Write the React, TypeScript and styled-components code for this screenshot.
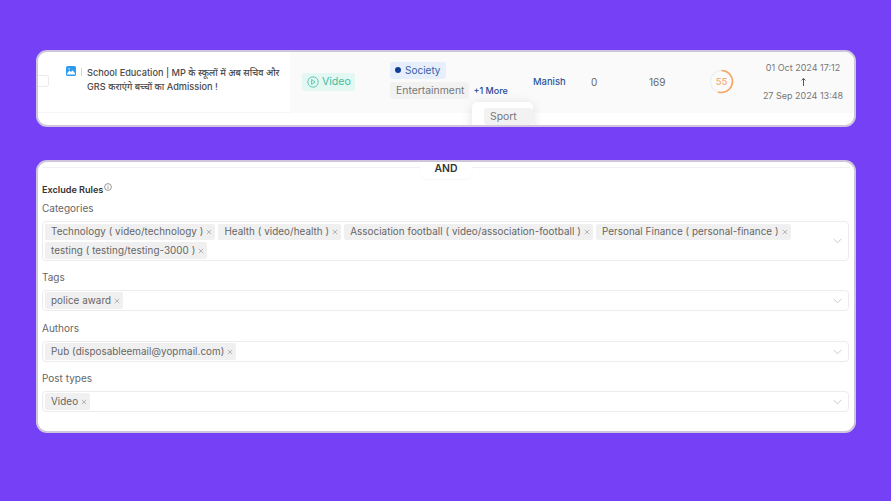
import React from 'react';
import styled, { createGlobalStyle } from 'styled-components';

const GlobalStyle = createGlobalStyle`
  html, body {
    margin: 0;
    padding: 0;
    background: #7540f6;
  }
  * {
    box-sizing: border-box;
  }
`;

const FONT = `Inter, "Noto Sans", "Noto Sans CJK SC", sans-serif`;

const Page = styled.div`
  width: 891px;
  height: 501px;
  padding: 50px 35px 0 36px;
  display: flex;
  flex-direction: column;
  gap: 33px;
  font-family: ${FONT};
  background: #7540f6;
  overflow: hidden;
`;

const Card = styled.section<{ $height: number }>`
  position: relative;
  height: ${p => p.$height}px;
  background: #fff;
  border: 2px solid #cfc6de;
  border-radius: 11px;
  overflow: hidden;
`;

const Row = styled.div`
  display: flex;
  height: 61px;
  color: #666;
  font-size: 10.5px;
`;

const TitleCell = styled.div`
  flex: none;
  width: 252px;
  height: 61px;
  display: flex;
  align-items: flex-start;
  padding-top: 13px;
  border-bottom: 1px solid #f4f4f4;
`;

const Checkbox = styled.span`
  flex: none;
  width: 11px;
  height: 12px;
  margin-top: 10px;
  background: #fff;
  border: 1px solid #ebebeb;
  border-left: none;
  border-radius: 0 3px 3px 0;
`;

const MediaIcon = styled.svg`
  flex: none;
  width: 10px;
  height: 10px;
  margin-left: 17px;
  margin-top: 1px;
`;

const Divider = styled.span`
  flex: none;
  width: 1px;
  height: 8px;
  margin: 3px 5px 0 5px;
  background: #d4d4d4;
`;

const Title = styled.div`
  width: 199px;
  font-size: 9.2px;
  font-weight: 500;
  line-height: 14px;
  color: #4a4a4a;
  margin-top: 1px;
`;

const DataCells = styled.div`
  flex: 1;
  height: 61px;
  padding-bottom: 2px;
  display: flex;
  align-items: center;
  background: #fafafa;
`;

const Cell = styled.div<{ $width: number; $center?: boolean }>`
  flex: none;
  width: ${p => p.$width}px;
  display: flex;
  align-items: center;
  justify-content: ${p => (p.$center ? 'center' : 'flex-start')};
`;

const TypeChip = styled.span`
  margin-left: 12px;
  height: 18px;
  width: 53px;
  display: flex;
  align-items: center;
  gap: 3px;
  padding-left: 5px;
  border-radius: 3px;
  background: #e3f8f2;
  color: #3fbfa4;
  font-size: 10.6px;
`;

const TagStack = styled.div`
  display: flex;
  flex-direction: column;
  gap: 3px;
  margin-top: -3px;
`;

const TagLine = styled.div`
  display: flex;
  align-items: center;
  gap: 4px;
`;

const SocietyChip = styled.span`
  align-self: flex-start;
  height: 17px;
  display: flex;
  align-items: center;
  gap: 4px;
  padding: 0 6px 0 5px;
  border-radius: 3px;
  background: #e6effb;
  color: #3a5ea8;
  font-size: 10px;
`;

const Dot = styled.span`
  width: 6px;
  height: 6px;
  border-radius: 50%;
  background: #123f96;
`;

const GreyChip = styled.span`
  height: 17px;
  display: flex;
  align-items: center;
  padding: 0 5px 0 6px;
  border-radius: 3px;
  background: #f2f2f2;
  color: #777;
  font-size: 10.4px;
`;

const MoreLink = styled.span`
  color: #1f4b99;
  font-size: 9px;
  font-weight: 500;
  white-space: nowrap;
`;

const Popover = styled.div`
  position: absolute;
  left: 434px;
  top: 50px;
  width: 61px;
  height: 40px;
  padding: 6px 0 0 12px;
  background: #fff;
  border-radius: 5px;
  box-shadow: 0 2px 12px rgba(0, 0, 0, 0.12);
`;

const Author = styled.span`
  color: #2f5597;
  font-size: 9.4px;
  font-weight: 500;
`;

const Count = styled.span`
  color: #666;
  font-size: 10px;
`;

const Dates = styled.div`
  width: 100%;
  display: flex;
  flex-direction: column;
  align-items: center;
  color: #777;
  font-size: 9px;
  line-height: 14px;
  white-space: nowrap;
`;

const Arrow = styled.svg`
  width: 7px;
  height: 14px;
`;

const ScoreText = styled.text`
  font-family: ${FONT};
  font-size: 9.5px;
  font-weight: 500;
  fill: #f6ad76;
`;

const Form = styled.div`
  position: relative;
  height: 100%;
  padding: 21px 5px 0 4px;
`;

const TopRule = styled.div`
  position: absolute;
  left: 4px;
  right: 4px;
  top: 5px;
  height: 1px;
  background: #f0f0f0;
`;

const AndPill = styled.div`
  position: absolute;
  left: 382px;
  top: 0;
  width: 52px;
  height: 17px;
  display: flex;
  align-items: flex-start;
  justify-content: center;
  background: #fff;
  border-radius: 0 0 8px 8px;
  box-shadow: 0 1px 2px rgba(0, 0, 0, 0.04);
  color: #333;
  font-size: 10.4px;
  font-weight: 600;
`;

const RulesHeading = styled.div`
  display: flex;
  align-items: flex-start;
  height: 13px;
  color: #333;
  font-size: 9.1px;
  font-weight: 600;
  line-height: 13px;
`;

const InfoIcon = styled.svg`
  width: 8px;
  height: 8px;
  margin-left: 1px;
`;

const FieldLabel = styled.div`
  height: 13px;
  color: #666;
  font-size: 10px;
  line-height: 13px;
`;

const Field = styled.div<{ $marginTop: number; $minHeight: number }>`
  display: flex;
  align-items: center;
  justify-content: space-between;
  min-height: ${p => p.$minHeight}px;
  margin-top: ${p => p.$marginTop}px;
  padding: 1px 6px 1px 2px;
  border: 1px solid #ececec;
  border-radius: 4px;
  background: #fff;
`;

const Pills = styled.div`
  display: flex;
  flex-wrap: wrap;
  gap: 2px 3px;
`;

const Pill = styled.span`
  height: 16.5px;
  display: flex;
  align-items: center;
  gap: 3px;
  padding: 0 3px 1px 6px;
  border-radius: 2px;
  background: #f0f0f0;
  color: #666;
  font-size: 9.85px;
  letter-spacing: 0.05px;
  white-space: nowrap;
`;

const Remove = styled.svg`
  width: 6px;
  height: 6px;
  margin-top: 2px;
`;

const Chevron = styled.svg`
  flex: none;
  width: 9px;
  height: 6px;
`;

const Section = styled.div<{ $marginTop: number }>`
  margin-top: ${p => p.$marginTop}px;
`;

const PlayIcon = () => (
  <svg width="12" height="12" viewBox="0 0 12 12" fill="none" stroke="#3fbfa4" strokeWidth="0.8">
    <circle cx="6" cy="6" r="5.2" />
    <path d="M4.6 3.6 8.2 6 4.6 8.4Z" />
  </svg>
);

const ScoreRing = ({ value }: { value: number }) => {
  const r = 11;
  const c = 2 * Math.PI * r;
  return (
    <svg width="25" height="25" viewBox="0 0 25 25">
      <circle cx="12.5" cy="12.5" r={r} fill="none" stroke="#f1f1f1" strokeWidth="1.6" />
      <circle
        cx="12.5"
        cy="12.5"
        r={r}
        fill="none"
        stroke="#f5a763"
        strokeWidth="1.6"
        strokeDasharray={`${(c * value) / 100} ${c}`}
        transform="rotate(-90 12.5 12.5)"
      />
      <ScoreText x="12.5" y="16" textAnchor="middle">{value}</ScoreText>
    </svg>
  );
};

const RemoveIcon = () => (
  <Remove viewBox="0 0 6 6" fill="none" stroke="#999" strokeWidth="0.7">
    <path d="M.8.8l4.4 4.4M5.2.8.8 5.2" />
  </Remove>
);

const ChevronIcon = () => (
  <Chevron viewBox="0 0 9 6" fill="none" stroke="#c4c4c4" strokeWidth="0.9">
    <path d="M.7 1l3.8 3.8L8.3 1" />
  </Chevron>
);

const MultiSelect = ({ values, marginTop, minHeight }: { values: string[]; marginTop: number; minHeight: number }) => (
  <Field $marginTop={marginTop} $minHeight={minHeight}>
    <Pills>
      {values.map(v => (
        <Pill key={v}>
          {v}
          <RemoveIcon />
        </Pill>
      ))}
    </Pills>
    <ChevronIcon />
  </Field>
);

const App: React.FC = () => (
  <Page>
    <GlobalStyle />
    <Card $height={77}>
      <Row>
        <TitleCell>
          <Checkbox />
          <MediaIcon viewBox="0 0 10 10">
            <rect width="10" height="10" rx="1.6" fill="#2f9bf0" />
            <path d="M1 7.4 3.4 4.6 5 6l1.6-1.8L9 7.2V8.4H1Z" fill="#fff" />
            <circle cx="3" cy="2.8" r="0.8" fill="#cfe8fc" />
          </MediaIcon>
          <Divider />
          <Title>School Education | MP के स्कूलों में अब सचिव और GRS कराएंगे बच्चों का Admission !</Title>
        </TitleCell>
        <DataCells>
          <Cell $width={100}>
            <TypeChip>
              <PlayIcon />
              Video
            </TypeChip>
          </Cell>
          <Cell $width={143}>
            <TagStack>
              <SocietyChip>
                <Dot />
                Society
              </SocietyChip>
              <TagLine>
                <GreyChip>Entertainment</GreyChip>
                <MoreLink>+1 More</MoreLink>
              </TagLine>
            </TagStack>
          </Cell>
          <Cell $width={58}>
            <Author>Manish</Author>
          </Cell>
          <Cell $width={58}>
            <Count>0</Count>
          </Cell>
          <Cell $width={41}>
            <Count>169</Count>
          </Cell>
          <Cell $width={62} $center>
            <ScoreRing value={55} />
          </Cell>
          <Cell $width={102}>
            <Dates>
              <span>01 Oct 2024 17:12</span>
              <Arrow viewBox="0 0 7 14" fill="none" stroke="#444" strokeWidth="0.9">
                <path d="M3.5 11V3.6M1.6 5.4 3.5 3.4l1.9 2" />
              </Arrow>
              <span>27 Sep 2024 13:48</span>
            </Dates>
          </Cell>
        </DataCells>
      </Row>
      <Popover>
        <GreyChip>Sport</GreyChip>
      </Popover>
    </Card>

    <Card $height={273}>
      <TopRule />
      <AndPill>AND</AndPill>
      <Form>
        <RulesHeading>
          Exclude Rules
          <InfoIcon viewBox="0 0 8 8" fill="none" stroke="#555" strokeWidth="0.6">
            <circle cx="4" cy="4" r="3.4" />
            <path d="M4 3.4v2.4M4 2.1v.6" />
          </InfoIcon>
        </RulesHeading>
        <Section $marginTop={6}>
          <FieldLabel>Categories</FieldLabel>
          <MultiSelect
            marginTop={6}
            minHeight={40}
            values={[
              'Technology ( video/technology )',
              'Health ( video/health )',
              'Association football ( video/association-football )',
              'Personal Finance ( personal-finance )',
              'testing ( testing/testing-3000 )',
            ]}
          />
        </Section>
        <Section $marginTop={10}>
          <FieldLabel>Tags</FieldLabel>
          <MultiSelect marginTop={6} minHeight={21} values={['police award']} />
        </Section>
        <Section $marginTop={11}>
          <FieldLabel>Authors</FieldLabel>
          <MultiSelect marginTop={6} minHeight={21} values={['Pub (disposableemail@yopmail.com)']} />
        </Section>
        <Section $marginTop={10}>
          <FieldLabel>Post types</FieldLabel>
          <MultiSelect marginTop={6} minHeight={21} values={['Video']} />
        </Section>
      </Form>
    </Card>
  </Page>
);

export default App;
